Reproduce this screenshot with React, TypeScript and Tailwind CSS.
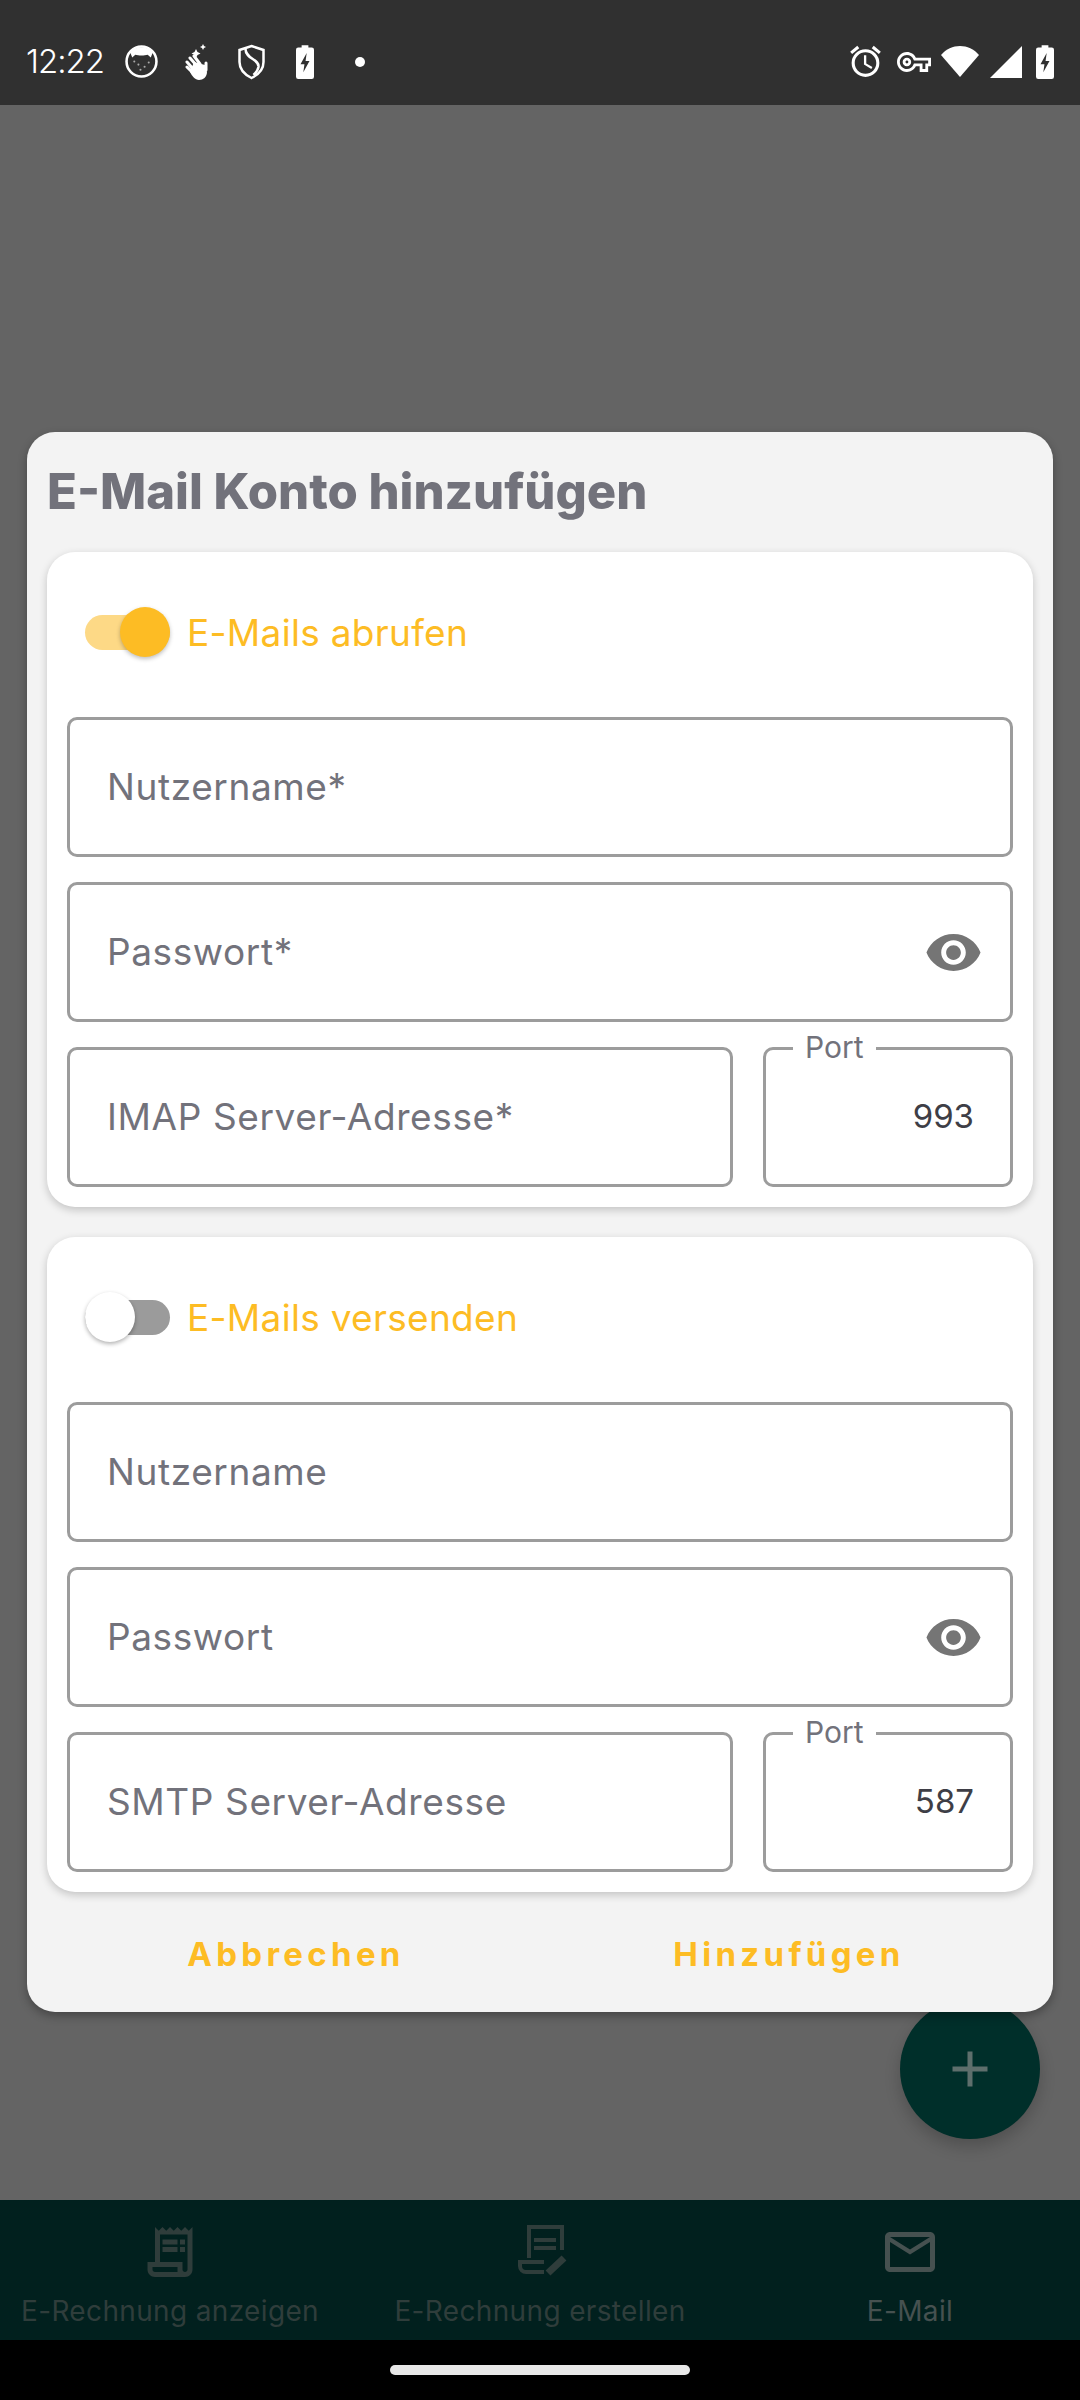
import { MdVisibility, MdAdd, MdOutlineReceiptLong, MdOutlineEmail, MdOutlineAlarm, MdOutlineVpnKey } from 'react-icons/md'

const Bolt = () => (
  <svg viewBox="0 0 16 30" className="h-[34px] w-[18px]">
    <path fillRule="evenodd" fill="#fff" d="M5 0h6v2h3a2 2 0 0 1 2 2v24a2 2 0 0 1-2 2H2a2 2 0 0 1-2-2V4a2 2 0 0 1 2-2h3zM9.500 7 4 17h3.500l-1 7L12 14H8.500z" />
  </svg>
)

const StatusBar = () => (
  <div className="flex h-[105px] items-center justify-between bg-[#303030] px-[26px] pt-[18px] text-white">
    <div className="flex items-center">
      <span className="w-[80px] text-[33px] font-light tracking-[-1px]">12:22</span>
      <svg viewBox="0 0 32 32" className="ml-[19px] h-[33px] w-[33px]">
        <circle cx="16" cy="16" r="14.500" fill="#303030" stroke="#fff" strokeWidth="2.500" />
        <path fill="#fff" d="M5 7A15 15 0 0 1 27 7L25 12 22 9.500C19 10.500 13 10.500 10 9.500L7 12z" />
        <circle cx="9" cy="16" r="1" fill="#aaa" />
        <circle cx="13" cy="19" r="1" fill="#aaa" />
        <circle cx="19" cy="21" r="1" fill="#aaa" />
        <circle cx="15" cy="24" r="1" fill="#aaa" />
        <circle cx="23" cy="17" r="1" fill="#aaa" />
      </svg>
      <svg viewBox="0 0 24 36" className="ml-[27px] h-[36px] w-[24px]">
        <path fill="#fff" d="M9 18l11 3 2 7c0 5-4 8-8 8-4 0-7-4-9-8z" />
        <path stroke="#fff" strokeWidth="3" strokeLinecap="round" d="M5 14l7 8M2 18l7 8M2 23l6 6M21 19v7M9 12l6 8" />
        <path fill="#fff" d="M11 5l1.500 3 3 1.500-3 1.500-1.500 3-1.500-3-3-1.500 3-1.500zM18 0l1 2 2 1-2 1-1 2-1-2-2-1 2-1z" />
      </svg>
      <svg viewBox="0 0 28 36" className="ml-[28px] h-[36px] w-[29px]">
        <path fill="none" stroke="#fff" strokeWidth="2.500" d="M14 2l12 4v12c0 8-6 13-12 16C8 31 2 26 2 18V6z" />
        <path fill="none" stroke="#fff" strokeWidth="2.500" d="M8 5c0 10 14 10 13 18-.5 3-3 6-5 8" />
      </svg>
      <div className="ml-[30px]">
        <Bolt />
      </div>
      <span className="ml-[41px] h-[10px] w-[10px] rounded-full bg-white" />
    </div>
    <div className="flex items-center">
      <MdOutlineAlarm className="h-[37px] w-[37px]" />
      <MdOutlineVpnKey className="ml-[13px] h-[34px] w-[34px]" />
      <svg viewBox="0 0 38 31" className="ml-[10px] h-[31px] w-[38px]">
        <path fill="#fff" d="M0 9C5 3 12 0 19 0s14 3 19 9L19 31z" />
      </svg>
      <svg viewBox="0 0 32 32" className="ml-[11px] h-[32px] w-[32px]">
        <path fill="#fff" d="M32 0v32H0z" />
      </svg>
      <div className="ml-[14px]">
        <Bolt />
      </div>
    </div>
  </div>
)

const Field = ({ label, eye, className = '' }: { label: string; eye?: boolean; className?: string }) => (
  <div className={`flex h-[140px] items-center justify-between rounded-[10px] border-[3px] border-[#9c9c9c] pl-[37px] pr-[27px] text-[37px] tracking-[0.6px] text-[#72727b] ${className}`}>
    <span>{label}</span>
    {eye && <MdVisibility className="h-[59px] w-[59px] text-[#757575]" />}
  </div>
)

const PortField = ({ value }: { value: string }) => (
  <div className="relative flex h-[140px] w-[250px] items-center justify-end rounded-[10px] border-[3px] border-[#9c9c9c] pr-[36px] text-[33px] text-[#3e3e46]">
    <span className="absolute left-[27px] top-[-19px] bg-white px-[12px] text-[30px] leading-[32px] text-[#72727b]">Port</span>
    {value}
  </div>
)

const Toggle = ({ on }: { on: boolean }) => (
  <div className={`relative h-[35px] w-[85px] rounded-full ${on ? 'bg-[#fdd986]' : 'bg-[#9b9b9b]'}`}>
    <div
      className={
        on
          ? 'absolute right-0 top-[-8px] h-[50px] w-[50px] rounded-full bg-[#fdbc24] shadow-[0_2px_4px_rgba(0,0,0,0.25)]'
          : 'absolute left-0 top-[-8px] h-[50px] w-[50px] rounded-full bg-white shadow-[0_2px_4px_rgba(0,0,0,0.3)]'
      }
    />
  </div>
)

const AccountCard = ({ title, on, req, server, port }: { title: string; on: boolean; req: string; server: string; port: string }) => (
  <div className="rounded-[28px] bg-white px-[20px] pb-[20px] shadow-[0_3px_8px_rgba(0,0,0,0.2)]">
    <div className="flex h-[165px] items-center pb-[5px] pl-[18px]">
      <Toggle on={on} />
      <span className="ml-[17px] mt-[2px] text-[37px] tracking-[0.3px] text-[#fdbc24]">{title}</span>
    </div>
    <div className="flex flex-col gap-[25px]">
      <Field label={`Nutzername${req}`} />
      <Field label={`Passwort${req}`} eye />
      <div className="flex gap-[30px]">
        <Field label={server} className="flex-1" />
        <PortField value={port} />
      </div>
    </div>
  </div>
)

const NavItem = ({ label, icon, active }: { label: string; icon: React.ReactNode; active?: boolean }) => (
  <div className={`flex flex-col items-center ${active ? 'text-[#465150]' : 'text-[#2f3d3b]'}`}>
    <div className="flex h-[60px] items-center">{icon}</div>
    <span className="mt-[11px] whitespace-nowrap text-[28px] leading-[36px] tracking-[0.35px]">{label}</span>
  </div>
)

const EditReceiptIcon = () => (
  <svg viewBox="0 0 60 60" className="h-[60px] w-[60px]" fill="none" stroke="currentColor" strokeWidth="4">
    <path d="M19 36V5H52V28" />
    <path d="M24 18H46M24 26H46" />
    <path d="M34 40H10V44A6 6 0 0 0 16 50H34" />
    <path strokeWidth="7" d="M38 51L54 36" />
  </svg>
)

export default function App() {
  return (
    <div className="relative flex h-[2400px] w-[1080px] flex-col overflow-hidden bg-black font-['Inter','Noto_Sans',sans-serif]">
      <StatusBar />
      <div className="flex-1 bg-[#646464]" />
      <div className="grid h-[140px] grid-cols-[370px_370px_370px] content-start justify-center bg-[#01201e] pt-[22px]">
        <NavItem label="E-Rechnung anzeigen" icon={<MdOutlineReceiptLong className="h-[60px] w-[60px]" />} />
        <NavItem label="E-Rechnung erstellen" icon={<EditReceiptIcon />} />
        <NavItem label="E-Mail" active icon={<MdOutlineEmail className="h-[60px] w-[60px]" />} />
      </div>
      <div className="flex h-[60px] items-center justify-center">
        <div className="h-[10px] w-[300px] rounded-full bg-[#e8e8e8]" />
      </div>

      <div className="absolute left-[900px] top-[1999px] flex h-[140px] w-[140px] items-center justify-center rounded-full bg-[#002f2a] text-[#5e6f6c] shadow-[0_8px_16px_rgba(0,0,0,0.2)]">
        <MdAdd className="h-[60px] w-[60px]" />
      </div>

      <div className="absolute left-[27px] top-[432px] w-[1026px] rounded-[28px] bg-[#f3f3f3] shadow-[0_4px_10px_rgba(0,0,0,0.3)]">
        <h1 className="flex h-[120px] items-center pl-[20px] text-[49px] font-extrabold text-[#72727b]">E-Mail Konto hinzufügen</h1>
        <div className="flex flex-col gap-[30px] px-[20px]">
          <AccountCard title="E-Mails abrufen" on req="*" server="IMAP Server-Adresse*" port="993" />
          <AccountCard title="E-Mails versenden" on={false} req="" server="SMTP Server-Adresse" port="587" />
        </div>
        <div className="flex h-[120px] items-center pt-[6px] text-[33px] font-bold tracking-[4.300px] text-[#fdbc24]">
          <span className="w-[538px] text-center">Abbrechen</span>
          <span className="w-[448px] text-center">Hinzufügen</span>
        </div>
      </div>
    </div>
  )
}
